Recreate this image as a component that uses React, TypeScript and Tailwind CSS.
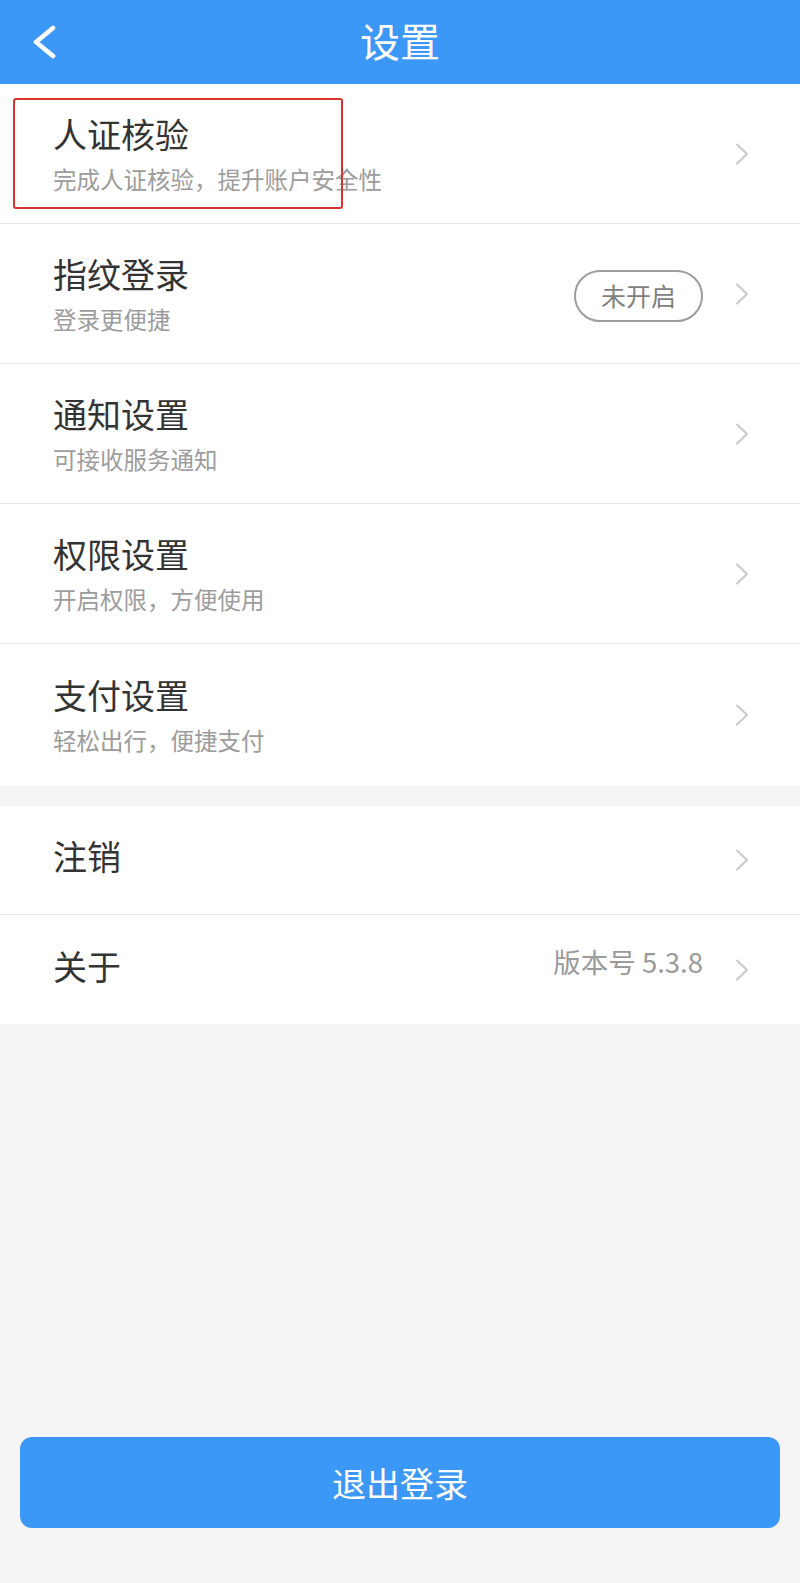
import type { ReactNode } from "react";

const font = { fontFamily: '"Noto Sans CJK SC", "Noto Sans", sans-serif' };

interface SettingItem {
  title: string;
  desc: string;
  extra?: ReactNode;
}

const mainItems: SettingItem[] = [
  { title: "人证核验", desc: "完成人证核验，提升账户安全性" },
  {
    title: "指纹登录",
    desc: "登录更便捷",
    extra: (
      <span className="flex h-[52px] items-center rounded-full border-2 border-[#9d9d9d] px-[25px] text-[25px] leading-none text-[#7f7f7f]">
        未开启
      </span>
    ),
  },
  { title: "通知设置", desc: "可接收服务通知" },
  { title: "权限设置", desc: "开启权限，方便使用" },
  { title: "支付设置", desc: "轻松出行，便捷支付" },
];

function Chevron() {
  return (
    <svg width="14" height="22" viewBox="0 0 14 22" fill="none" className="shrink-0">
      <polyline
        points="2,1.5 12,11 2,20.5"
        stroke="#c9c9c9"
        strokeWidth="2"
        strokeLinecap="round"
        strokeLinejoin="round"
      />
    </svg>
  );
}

function Row({ item, index, last }: { item: SettingItem; index: number; last: boolean }) {
  return (
    <div
      className={`relative flex items-center pl-[53px] pr-[51px] ${
        last ? "h-[142px]" : "h-[140px] border-b border-[#e6e6e6]"
      }`}
    >
      <div className="flex flex-1 flex-col gap-[10px]">
        <span className="text-[34px] leading-[40px] text-[#333333]">{item.title}</span>
        <span className="text-[23.5px] leading-[30px] text-[#9c9c9c]">{item.desc}</span>
      </div>
      {item.extra && <div className="mr-[32px] mt-[4px]">{item.extra}</div>}
      <Chevron />
      {index === 0 && (
        <div className="absolute left-[13px] top-[14px] h-[111px] w-[330px] rounded-[3px] border-2 border-[#d8332d]" />
      )}
    </div>
  );
}

export default function App() {
  return (
    <div className="flex min-h-[1583px] w-full flex-col bg-[#f4f4f4]" style={font}>
      <header className="grid h-[84px] grid-cols-[1fr_auto_1fr] items-center bg-[#3c98f6]">
        <div className="pl-[32px]">
          <svg width="24" height="34" viewBox="0 0 24 34" fill="none">
            <polyline
              points="21,3 4,17 21,31"
              stroke="#ffffff"
              strokeWidth="4.5"
              strokeLinecap="round"
              strokeLinejoin="round"
            />
          </svg>
        </div>
        <h1 className="pb-[4px] text-[40px] leading-none text-white">设置</h1>
        <div />
      </header>

      <section className="bg-white">
        {mainItems.map((item, i) => (
          <Row key={item.title} item={item} index={i} last={i === mainItems.length - 1} />
        ))}
      </section>

      <section className="mt-[20px] bg-white">
        <div className="flex h-[109px] items-center border-b border-[#e6e6e6] pl-[53px] pr-[51px]">
          <span className="flex-1 pb-[8px] text-[34px] leading-[40px] text-[#333333]">注销</span>
          <Chevron />
        </div>
        <div className="flex h-[109px] items-center pl-[53px] pr-[51px]">
          <span className="flex-1 pb-[8px] text-[34px] leading-[40px] text-[#333333]">关于</span>
          <span className="mr-[32px] pb-[18px] text-[27.5px] leading-[34px] text-[#9a9a9a]">版本号 5.3.8</span>
          <Chevron />
        </div>
      </section>

      <div className="flex-1" />

      <button
        type="button"
        className="mx-[20px] mb-[55px] flex h-[91px] items-center justify-center rounded-[12px] bg-[#3c98f6] text-[34px] text-white"
      >
        退出登录
      </button>
    </div>
  );
}
